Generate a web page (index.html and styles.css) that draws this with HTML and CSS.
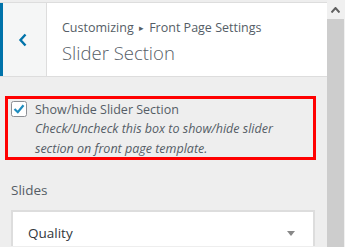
FILE: index.html
```html
<!DOCTYPE html>
<html lang="en">
<head>
    <meta charset="UTF-8">
    <meta name="viewport" content="width=device-width, initial-scale=1.0">
    <title>Slider Section</title>
    <link rel="stylesheet" href="styles.css">
</head>
<body>
    <div class="panel">
        <div class="topline"></div>
        <div class="head">
            <button class="back">
                <svg width="10" height="14" viewBox="0 0 10 14"><path d="M7.5 1.5 L2.5 7 L7.5 12.5" fill="none" stroke="#0073aa" stroke-width="2.4"/></svg>
            </button>
            <div class="titles">
                <p class="crumbs">Customizing <span class="sep">&#9656;</span> Front Page Settings</p>
                <h2 class="title">Slider Section</h2>
            </div>
        </div>
        <div class="control">
            <label class="check">
                <svg class="box" width="16" height="16" viewBox="0 0 16 16">
                    <rect x="0.5" y="0.5" width="15" height="15" rx="2" fill="#fff" stroke="#8c8f94"/>
                    <path d="M3.5 8 L6.8 11.2 L12.5 4.2" fill="none" stroke="#1e8cbe" stroke-width="2.2"/>
                </svg>
                <span class="label">Show/hide Slider Section</span>
            </label>
            <p class="desc">Check/Uncheck this box to show/hide slider section on front page template.</p>
        </div>
        <div class="slides">
            <p class="slides-title">Slides</p>
            <div class="select">
                <span>Quality</span>
                <span class="arrow"></span>
            </div>
        </div>
    </div>
    <div class="scrollbar">
        <div class="up">
            <svg width="9" height="6" viewBox="0 0 9 6"><path d="M0.5 5.5 L4.5 1 L8.5 5.5" fill="none" stroke="#606060" stroke-width="2"/></svg>
        </div>
        <div class="thumb"></div>
    </div>
</body>
</html>
```

FILE: styles.css
```css
* {
    margin: 0;
    padding: 0;
    box-sizing: border-box;
}
html, body {
    width: 345px;
    height: 247px;
    overflow: hidden;
}
body {
    display: flex;
    background: #eeeeee;
    font-family: "Open Sans", "Noto Sans", sans-serif;
    color: #555d66;
}
.panel {
    width: 327px;
    flex: none;
}
.topline {
    height: 3px;
    background: #eeeeee;
    border-bottom: 1px solid #dddddd;
}
.head {
    display: flex;
    height: 74px;
    background: #ffffff;
    border-bottom: 1px solid #dddddd;
}
.back {
    width: 47px;
    border: none;
    border-left: 3px solid #0073aa;
    border-right: 1px solid #dddddd;
    background: #f5f6f6;
    display: flex;
    align-items: center;
    justify-content: center;
    padding-right: 4px;
}
.titles {
    padding: 15px 0 0 15px;
}
.crumbs {
    font-size: 12.5px;
    line-height: 20px;
}
.sep {
    font-size: 9px;
    vertical-align: 1px;
    padding: 0 2px;
}
.title {
    font-weight: 300;
    font-size: 18.5px;
    line-height: 28px;
    margin-top: 1px;
}
.control {
    margin: 19px 0 0 5px;
    width: 311px;
    height: 64px;
    border: 3px solid #ff0000;
    padding: 1px 0 0 3px;
}
.check {
    display: flex;
    align-items: flex-start;
    gap: 8px;
}
.box {
    flex: none;
    margin-top: 1px;
}
.label {
    font-size: 12.5px;
    line-height: 19px;
}
.desc {
    font-style: italic;
    font-size: 12.5px;
    line-height: 20px;
    padding-left: 24px;
    padding-right: 10px;
}
.slides {
    padding: 20px 12px 0 11px;
}
.slides-title {
    font-size: 13.5px;
    line-height: 20px;
}
.select {
    margin-top: 10px;
    height: 36px;
    background: #ffffff;
    border: 2px solid #dddddd;
    border-bottom: none;
    display: flex;
    align-items: flex-start;
    justify-content: space-between;
    padding: 11px 18px 0 15px;
    font-size: 13.5px;
    line-height: 20px;
    color: #32373c;
}
.arrow {
    margin-top: 8px;
    width: 0;
    height: 0;
    border-left: 4px solid transparent;
    border-right: 4px solid transparent;
    border-top: 5px solid #888888;
}
.scrollbar {
    width: 18px;
    flex: none;
    display: flex;
    flex-direction: column;
    border-right: 1px solid #f0f0f0;
}
.up {
    height: 19px;
    background: #f0f0f0;
    display: flex;
    justify-content: center;
    padding-top: 7px;
}
.thumb {
    flex: 1;
    background: #cdcdcd;
}
```
